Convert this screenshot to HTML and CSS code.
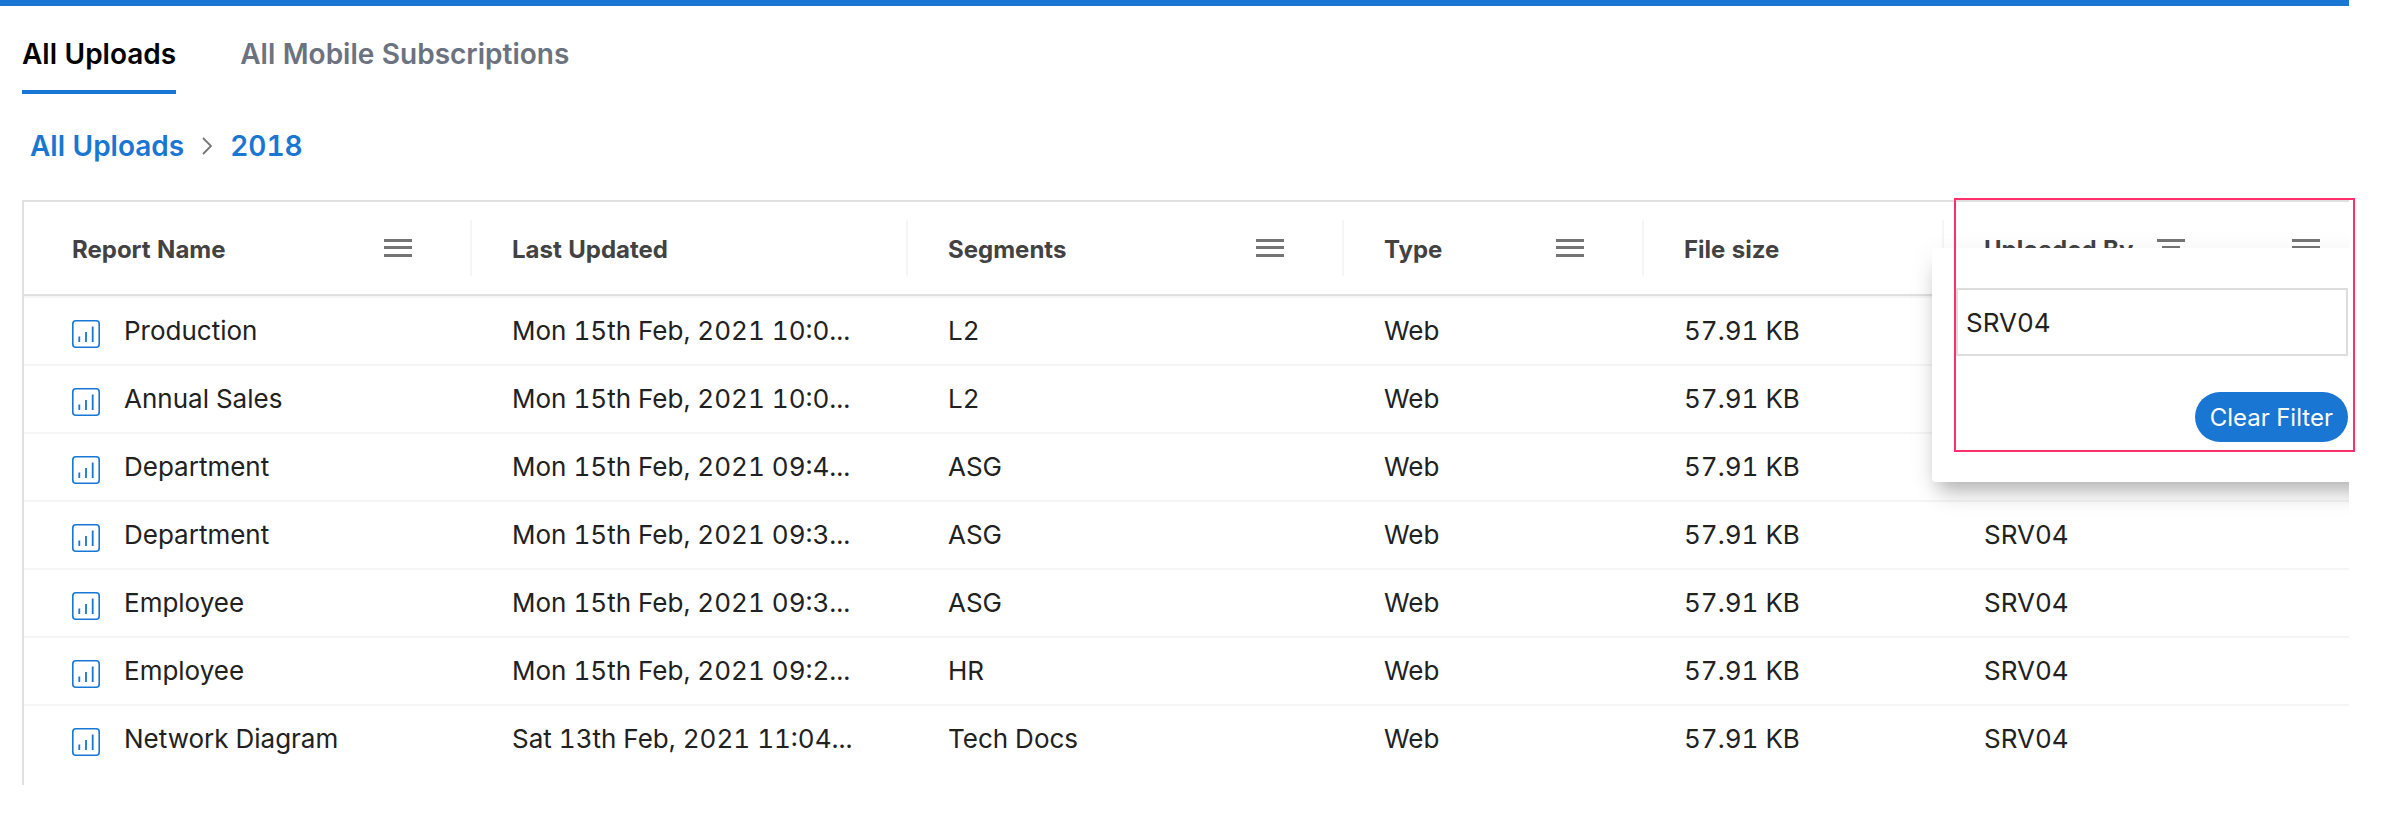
FILE: index.html
```html
<!DOCTYPE html>
<html lang="en">
<head>
<meta charset="utf-8">
<title>All Uploads</title>
<link rel="stylesheet" href="styles.css">
</head>
<body>
<svg class="sprite" aria-hidden="true">
  <symbol id="menu" viewBox="0 0 28 18"><path d="M0 0h28v3H0zM0 7h28v3H0zM0 15h28v3H0z"/></symbol>
  <symbol id="filter" viewBox="0 0 28 18"><path d="M0 0h28v3H0zM5 7h18v3H5zM11 15h6v3h-6z"/></symbol>
  <symbol id="report" viewBox="0 0 28 28"><g fill="none" stroke="#1976d2"><rect x=".8" y=".8" width="26.4" height="26.4" rx="3" stroke-width="1.6"/><path d="M7.3 16.5v5.5M14 12v10M20.7 6.5V22" stroke-width="1.8"/></g></symbol>
</svg>
<div class="stage">
  <div class="app">
    <nav class="tabs">
      <a class="tab tab-active" href="#uploads">All Uploads</a>
      <a class="tab" href="#mobile">All Mobile Subscriptions</a>
    </nav>
    <nav class="crumbs">
      <a class="crumb" href="#uploads">All Uploads</a>
      <svg class="chevron" viewBox="0 0 10 18"><path d="M1 1l8 8-8 8" fill="none" stroke="#757575" stroke-width="1.8"/></svg>
      <a class="crumb" href="#2018">2018</a>
    </nav>
    <div class="grid">
      <table class="table">
        <colgroup><col class="col-name"><col class="col-wide"><col class="col-wide"><col class="col-narrow"><col class="col-narrow"><col></colgroup>
        <thead>
          <tr>
            <th><div class="head"><span class="title">Report Name</span><button class="menu" type="button" aria-label="Column menu"><svg class="bars"><use href="#menu"/></svg></button></div></th>
            <th><div class="head"><span class="title">Last Updated</span></div></th>
            <th><div class="head"><span class="title">Segments</span><button class="menu" type="button" aria-label="Column menu"><svg class="bars"><use href="#menu"/></svg></button></div></th>
            <th><div class="head"><span class="title">Type</span><button class="menu" type="button" aria-label="Column menu"><svg class="bars"><use href="#menu"/></svg></button></div></th>
            <th><div class="head"><span class="title">File size</span></div></th>
            <th><div class="head head-last"><span class="title">Uploaded By</span><svg class="bars filtered"><use href="#filter"/></svg><button class="menu" type="button" aria-label="Column menu"><svg class="bars"><use href="#menu"/></svg></button></div></th>
          </tr>
        </thead>
        <tbody>
          <tr><td><div class="name"><svg class="report"><use href="#report"/></svg>Production</div></td><td>Mon 15th Feb, 2021 10:0...</td><td>L2</td><td>Web</td><td>57.91 KB</td><td></td></tr>
          <tr><td><div class="name"><svg class="report"><use href="#report"/></svg>Annual Sales</div></td><td>Mon 15th Feb, 2021 10:0...</td><td>L2</td><td>Web</td><td>57.91 KB</td><td></td></tr>
          <tr><td><div class="name"><svg class="report"><use href="#report"/></svg>Department</div></td><td>Mon 15th Feb, 2021 09:4...</td><td>ASG</td><td>Web</td><td>57.91 KB</td><td></td></tr>
          <tr><td><div class="name"><svg class="report"><use href="#report"/></svg>Department</div></td><td>Mon 15th Feb, 2021 09:3...</td><td>ASG</td><td>Web</td><td>57.91 KB</td><td>SRV04</td></tr>
          <tr><td><div class="name"><svg class="report"><use href="#report"/></svg>Employee</div></td><td>Mon 15th Feb, 2021 09:3...</td><td>ASG</td><td>Web</td><td>57.91 KB</td><td>SRV04</td></tr>
          <tr><td><div class="name"><svg class="report"><use href="#report"/></svg>Employee</div></td><td>Mon 15th Feb, 2021 09:2...</td><td>HR</td><td>Web</td><td>57.91 KB</td><td>SRV04</td></tr>
          <tr><td><div class="name"><svg class="report"><use href="#report"/></svg>Network Diagram</div></td><td>Sat 13th Feb, 2021 11:04...</td><td>Tech Docs</td><td>Web</td><td>57.91 KB</td><td>SRV04</td></tr>
        </tbody>
      </table>
      <form class="popup">
        <input class="field" type="text" value="SRV04" aria-label="Filter value">
        <button class="clear" type="button">Clear Filter</button>
      </form>
    </div>
  </div>
  <div class="highlight"></div>
</div>
</body>
</html>
```

FILE: styles.css
```css
* { box-sizing: border-box; }

body {
  margin: 0;
  background: #fff;
  color: #212121;
  font-family: Inter, "Liberation Sans", sans-serif;
  font-size: 26px;
  font-variant-numeric: tabular-nums;
}

.sprite { display: none; }

.stage {
  position: relative;
  margin-right: 47px;
}

.app {
  overflow: hidden;
  border-top: 6px solid #1976d2;
}

.tabs {
  display: flex;
  gap: 64px;
  padding: 26px 22px 0;
}

.tab {
  padding-bottom: 14px;
  border-bottom: 4px solid transparent;
  color: #6b7280;
  font-size: 28px;
  font-weight: 600;
  line-height: 44px;
  text-decoration: none;
}

.tab-active {
  border-color: #1976d2;
  color: #000;
}

.crumbs {
  display: flex;
  align-items: center;
  gap: 18px;
  padding: 30px 30px 32px;
}

.crumb {
  color: #1976d2;
  font-size: 28px;
  font-weight: 600;
  line-height: 44px;
  text-decoration: none;
}

.chevron {
  width: 10px;
  height: 18px;
}

.grid {
  position: relative;
  margin-left: 22px;
  padding-bottom: 13px;
  border-top: 2px solid #e0e0e0;
  border-left: 2px solid #e0e0e0;
}

.table {
  width: 100%;
  border-spacing: 0;
  table-layout: fixed;
}

.col-name { width: 448px; }
.col-wide { width: 436px; }
.col-narrow { width: 300px; }

th {
  height: 94px;
  padding: 0;
  border-bottom: 2px solid #e0e0e0;
  color: #424242;
  font-size: 24px;
  font-weight: 700;
  text-align: left;
}

.head {
  display: flex;
  align-items: center;
  height: 56px;
  padding: 0 58px 0 40px;
  border-right: 2px solid #f5f5f5;
}

th:first-child .head { padding-left: 48px; }

.title { padding-top: 2px; }

.head-last {
  padding-right: 29px;
  border-right: 0;
}

.menu {
  display: flex;
  margin-left: auto;
  padding: 0;
  border: 0;
  background: none;
}

.bars {
  width: 28px;
  height: 18px;
  fill: #757575;
}

.filtered { margin-left: 24px; }

td {
  height: 68px;
  padding: 0 0 2px 40px;
  border-top: 2px solid #f5f5f5;
  white-space: nowrap;
}

td:first-child { padding-left: 48px; }

.name {
  display: flex;
  align-items: center;
  gap: 24px;
}

.report {
  width: 28px;
  height: 36px;
  padding-top: 8px;
}

.popup {
  position: absolute;
  top: 46px;
  right: -31px;
  display: flex;
  flex-direction: column;
  gap: 36px;
  width: 448px;
  padding: 40px 32px 40px 24px;
  border-radius: 4px;
  background: #fff;
  box-shadow: 0 12px 16px -8px rgba(0, 0, 0, .16), 0 18px 22px -6px rgba(0, 0, 0, .14), 0 6px 28px 0 rgba(0, 0, 0, .07);
}

.field {
  width: 100%;
  height: 68px;
  padding: 0 8px;
  border: 2px solid #ddd;
  background: #fff;
  color: #212121;
  font: inherit;
}

.clear {
  align-self: flex-end;
  height: 50px;
  padding: 0 15px;
  border: 0;
  border-radius: 25px;
  background: #1976d2;
  color: #fff;
  font: inherit;
  font-size: 24px;
}

.highlight {
  position: absolute;
  top: 198px;
  right: -6px;
  width: 401px;
  height: 254px;
  border: 2px solid #ff2f6d;
  pointer-events: none;
}
```
